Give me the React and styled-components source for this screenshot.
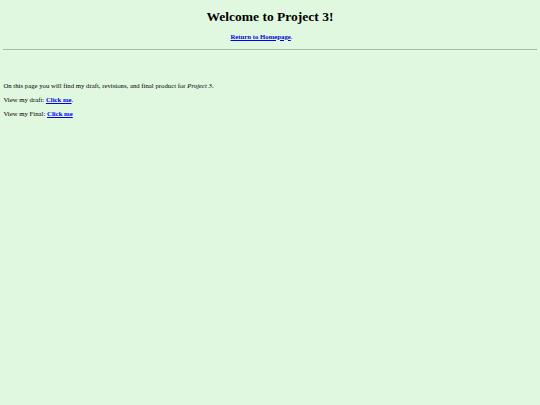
import styled, { createGlobalStyle } from "styled-components";

const GlobalStyle = createGlobalStyle`
  html, body {
    margin: 0;
    background-color: #e0f8e0;
  }
  body {
    font-family: "Liberation Serif", "Times New Roman", serif;
    color: #000;
    min-height: 405px;
  }
`;

const Page = styled.div`
  padding: 3.4px;
  font-size: 6.75px;
`;

const Title = styled.h1`
  text-align: center;
  font-size: 13.5px;
  font-weight: bold;
  margin: 5.8px 0 8px;
  line-height: 1.15;
`;

const Center = styled.p`
  text-align: center;
  margin: 0 0 8.2px;
  padding-right: 17px;
  line-height: 1.15;
`;

const Link = styled.a`
  color: #0000ee;
  font-weight: bold;
  text-decoration: underline;
`;

const Rule = styled.hr`
  margin: 0;
  border: none;
  border-top: 1px solid #a8b8a8;
  border-bottom: 1px solid #e8f8e8;
`;

const Body = styled.div`
  padding-top: 31.5px;
`;

const Text = styled.p`
  margin: 0 0 6.2px;
  line-height: 1.15;
`;

export default function App() {
  return (
    <>
      <GlobalStyle />
      <Page>
        <Title>Welcome to Project 3!</Title>
        <Center>
          <Link href="#">Return to Homepage</Link>.
        </Center>
        <Rule />
        <Body>
          <Text>
            On this page you will find my draft, revisions, and final product
            for <i>Project 3</i>.
          </Text>
          <Text>
            View my draft: <Link href="#">Click me</Link>.
          </Text>
          <Text>
            View my Final: <Link href="#">Click me</Link>
          </Text>
        </Body>
      </Page>
    </>
  );
}
